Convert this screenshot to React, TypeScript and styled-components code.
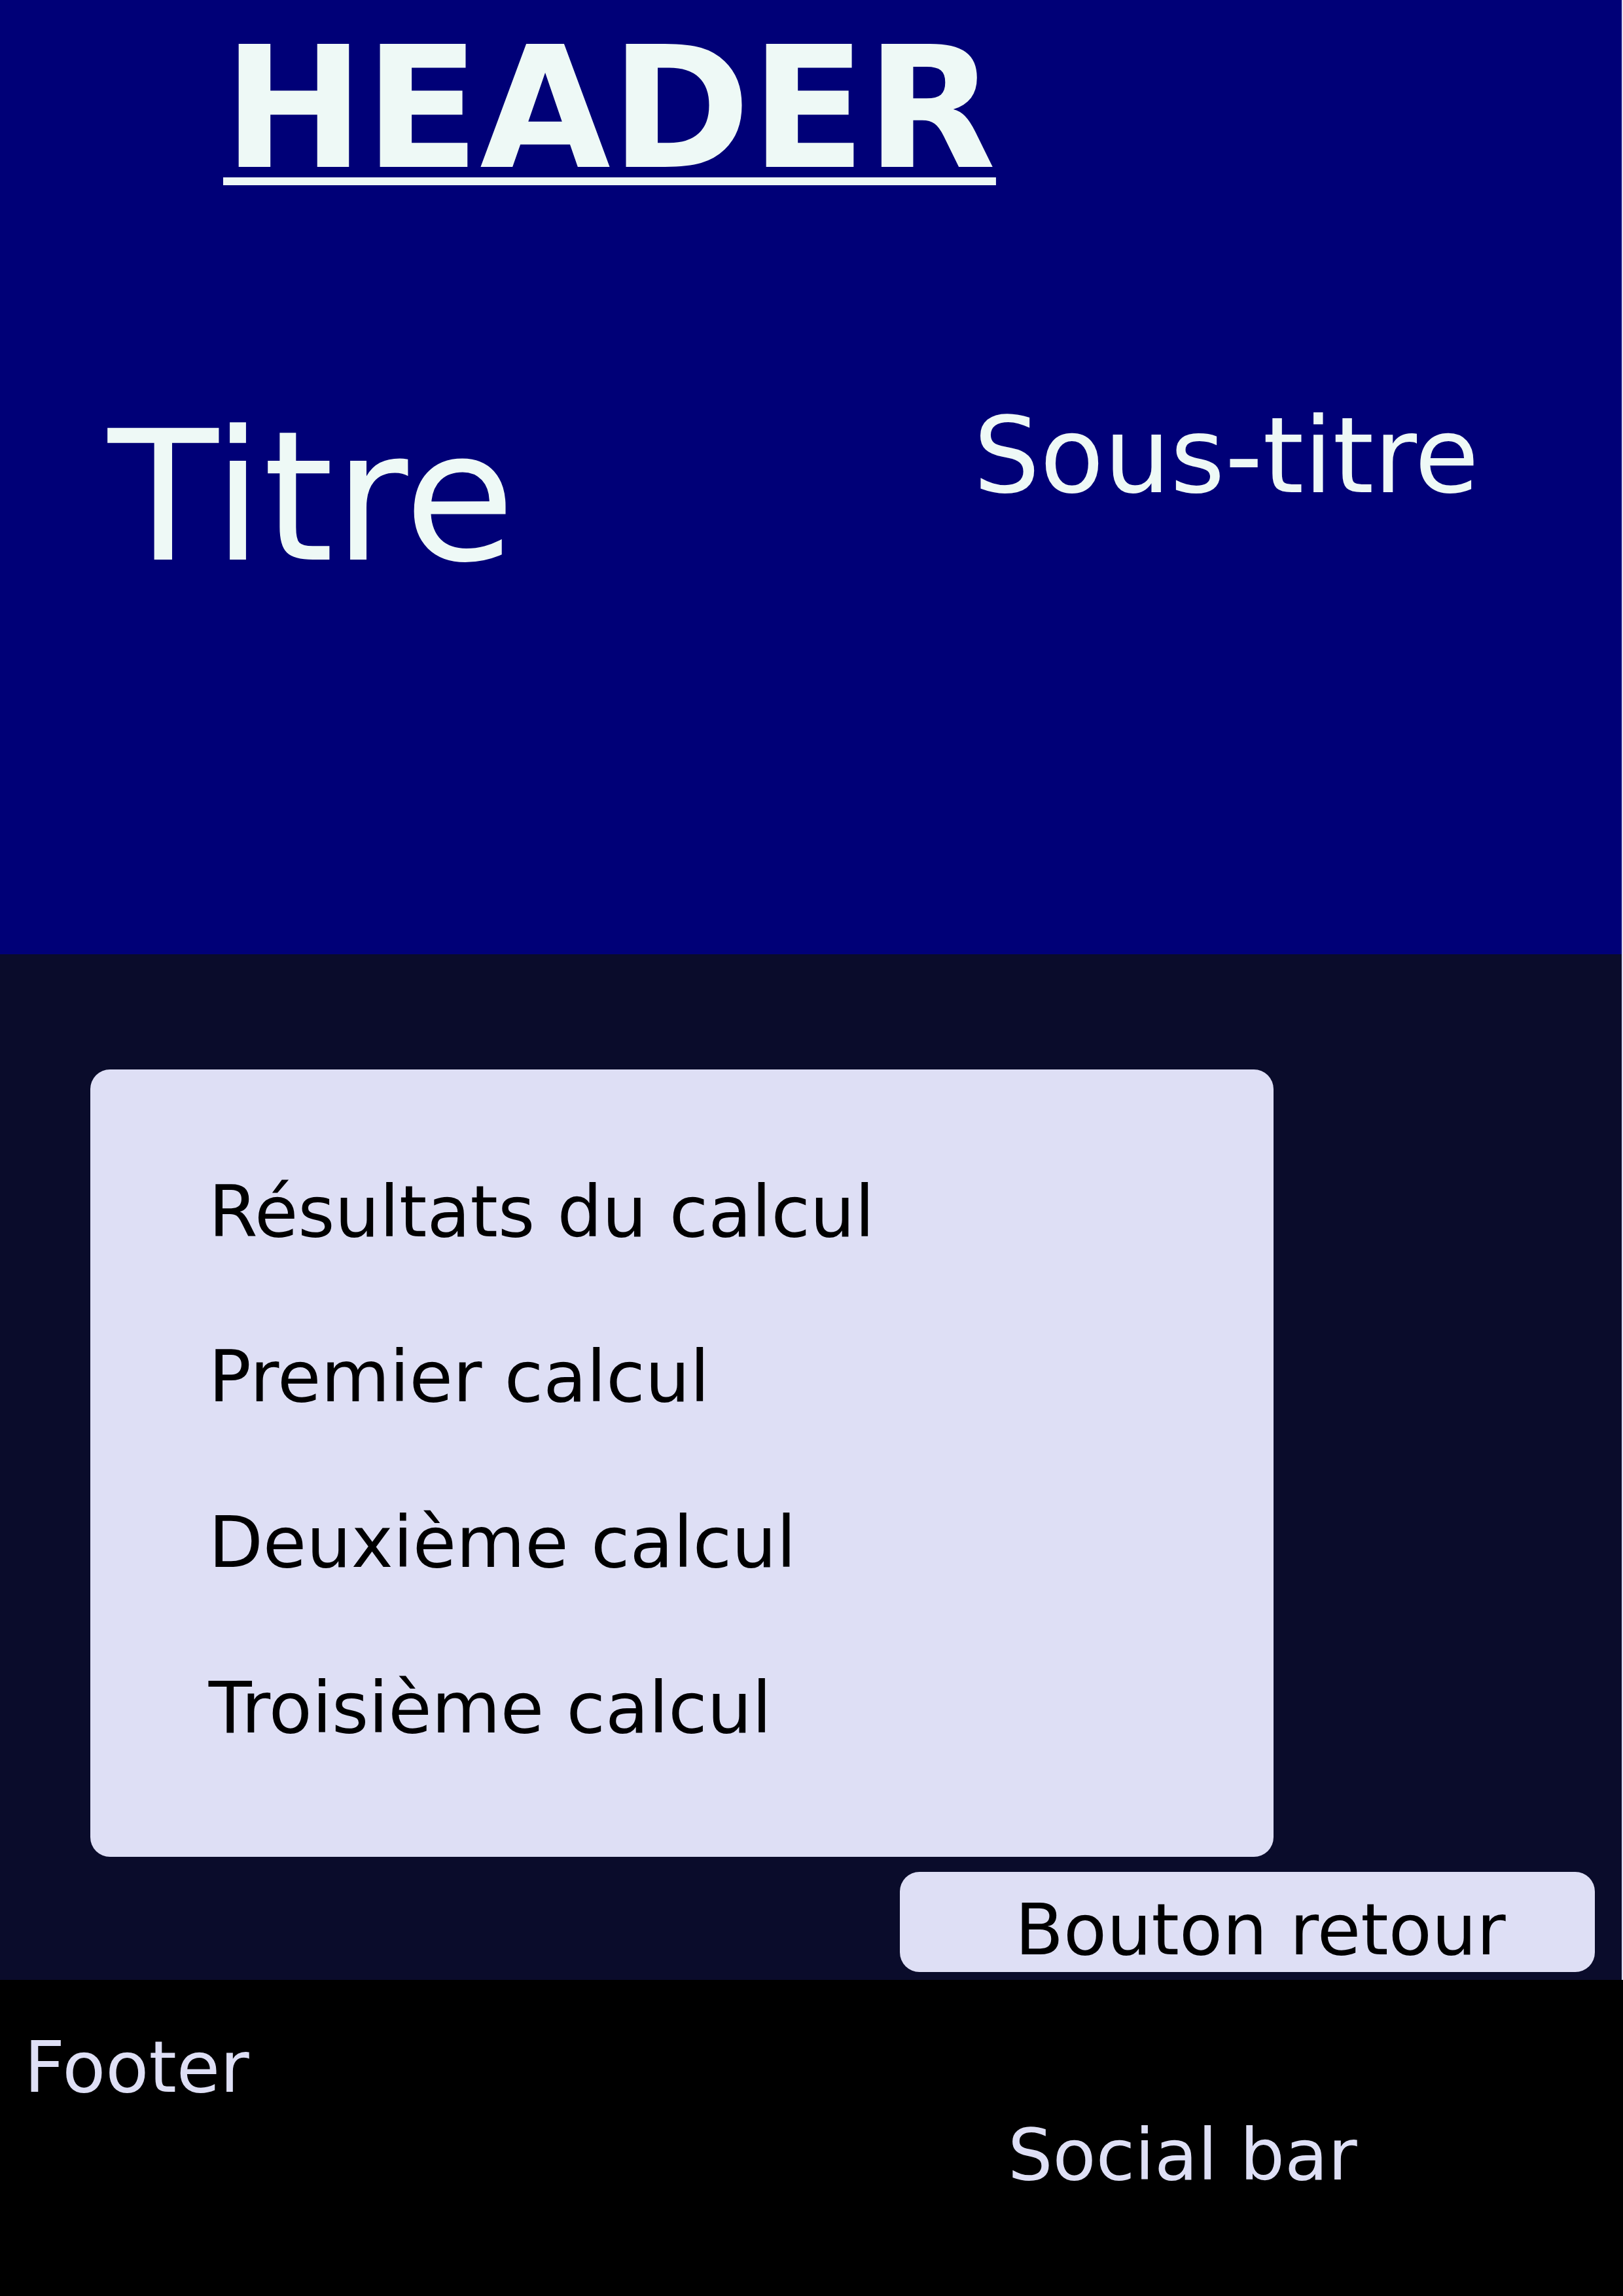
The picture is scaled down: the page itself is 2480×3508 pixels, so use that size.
import React from "react";
import styled, { createGlobalStyle } from "styled-components";

const GlobalStyle = createGlobalStyle`
  html, body {
    margin: 0;
    padding: 0;
    background: #dedff5;
  }
  body {
    font-family: "DejaVu Sans", "Verdana", sans-serif;
  }
  * { box-sizing: border-box; }
`;

const Page = styled.div`
  display: flex;
  flex-direction: column;
  width: 2480px;
`;

const Header = styled.header`
  width: 2478px;
  height: 1458px;
  background: #000077;
  color: #eef9f6;
  display: flex;
  flex-direction: column;
`;

const Brand = styled.h1`
  margin: 16px 0 0 341px;
  font-family: "DejaVu Sans", sans-serif;
  font-weight: bold;
  font-size: 258px;
  line-height: 300px;
  text-decoration: underline;
  text-decoration-thickness: 12px;
  text-underline-offset: 16px;
  align-self: flex-start;
`;

const TitleRow = styled.div`
  display: flex;
  align-items: flex-start;
  margin-top: 283px;
`;

const Title = styled.h2`
  margin: 0 0 0 165px;
  font-weight: normal;
  font-size: 276px;
  line-height: 321.3px;
`;

const Subtitle = styled.h3`
  margin: 4.5px 218px 0 auto;
  font-weight: normal;
  font-size: 160px;
  line-height: 186.2px;
`;

const Main = styled.main`
  width: 2478px;
  height: 1567px;
  background: #0a0c2b;
  padding: 176px 0 0 138px;
  display: flex;
  flex-direction: column;
`;

const Card = styled.section`
  width: 1808px;
  height: 1203px;
  background: #dedff5;
  border-radius: 30px;
  padding: 154.8px 0 0 180.7px;
  display: flex;
  flex-direction: column;
  gap: 126.9px;
`;

const ResultLine = styled.p`
  margin: 0;
  font-size: 108px;
  line-height: 125.7px;
  color: #000;
`;

const BackButton = styled.button`
  margin: 23px 0 0 1237px;
  width: 1062px;
  height: 153px;
  border: none;
  border-radius: 30px;
  background: #dedff5;
  color: #000;
  font-family: "DejaVu Sans", sans-serif;
  font-size: 108px;
  line-height: 125.7px;
  padding: 23.8px 0 0 176px;
  text-align: left;
  white-space: nowrap;
  display: block;
  align-self: flex-start;
`;

const Footer = styled.footer`
  width: 2480px;
  height: 483px;
  background: #000;
  color: #dedff5;
  display: flex;
  flex-direction: column;
  align-items: flex-start;
`;

const FooterLabel = styled.div<{ $top: number; $left: number }>`
  margin: ${(p) => p.$top}px 0 0 ${(p) => p.$left}px;
  font-size: 108px;
  line-height: 125.7px;
`;

const results = [
  "Résultats du calcul",
  "Premier calcul",
  "Deuxième calcul",
  "Troisième calcul",
];

export default function App() {
  return (
    <>
      <GlobalStyle />
      <Page>
        <Header>
          <Brand>HEADER</Brand>
          <TitleRow>
            <Title>Titre</Title>
            <Subtitle>Sous-titre</Subtitle>
          </TitleRow>
        </Header>
        <Main>
          <Card>
            {results.map((r) => (
              <ResultLine key={r}>{r}</ResultLine>
            ))}
          </Card>
          <BackButton type="button">Bouton retour</BackButton>
        </Main>
        <Footer>
          <FooterLabel $top={70.8} $left={37}>
            Footer
          </FooterLabel>
          <FooterLabel $top={8.3} $left={1540}>
            Social bar
          </FooterLabel>
        </Footer>
      </Page>
    </>
  );
}
